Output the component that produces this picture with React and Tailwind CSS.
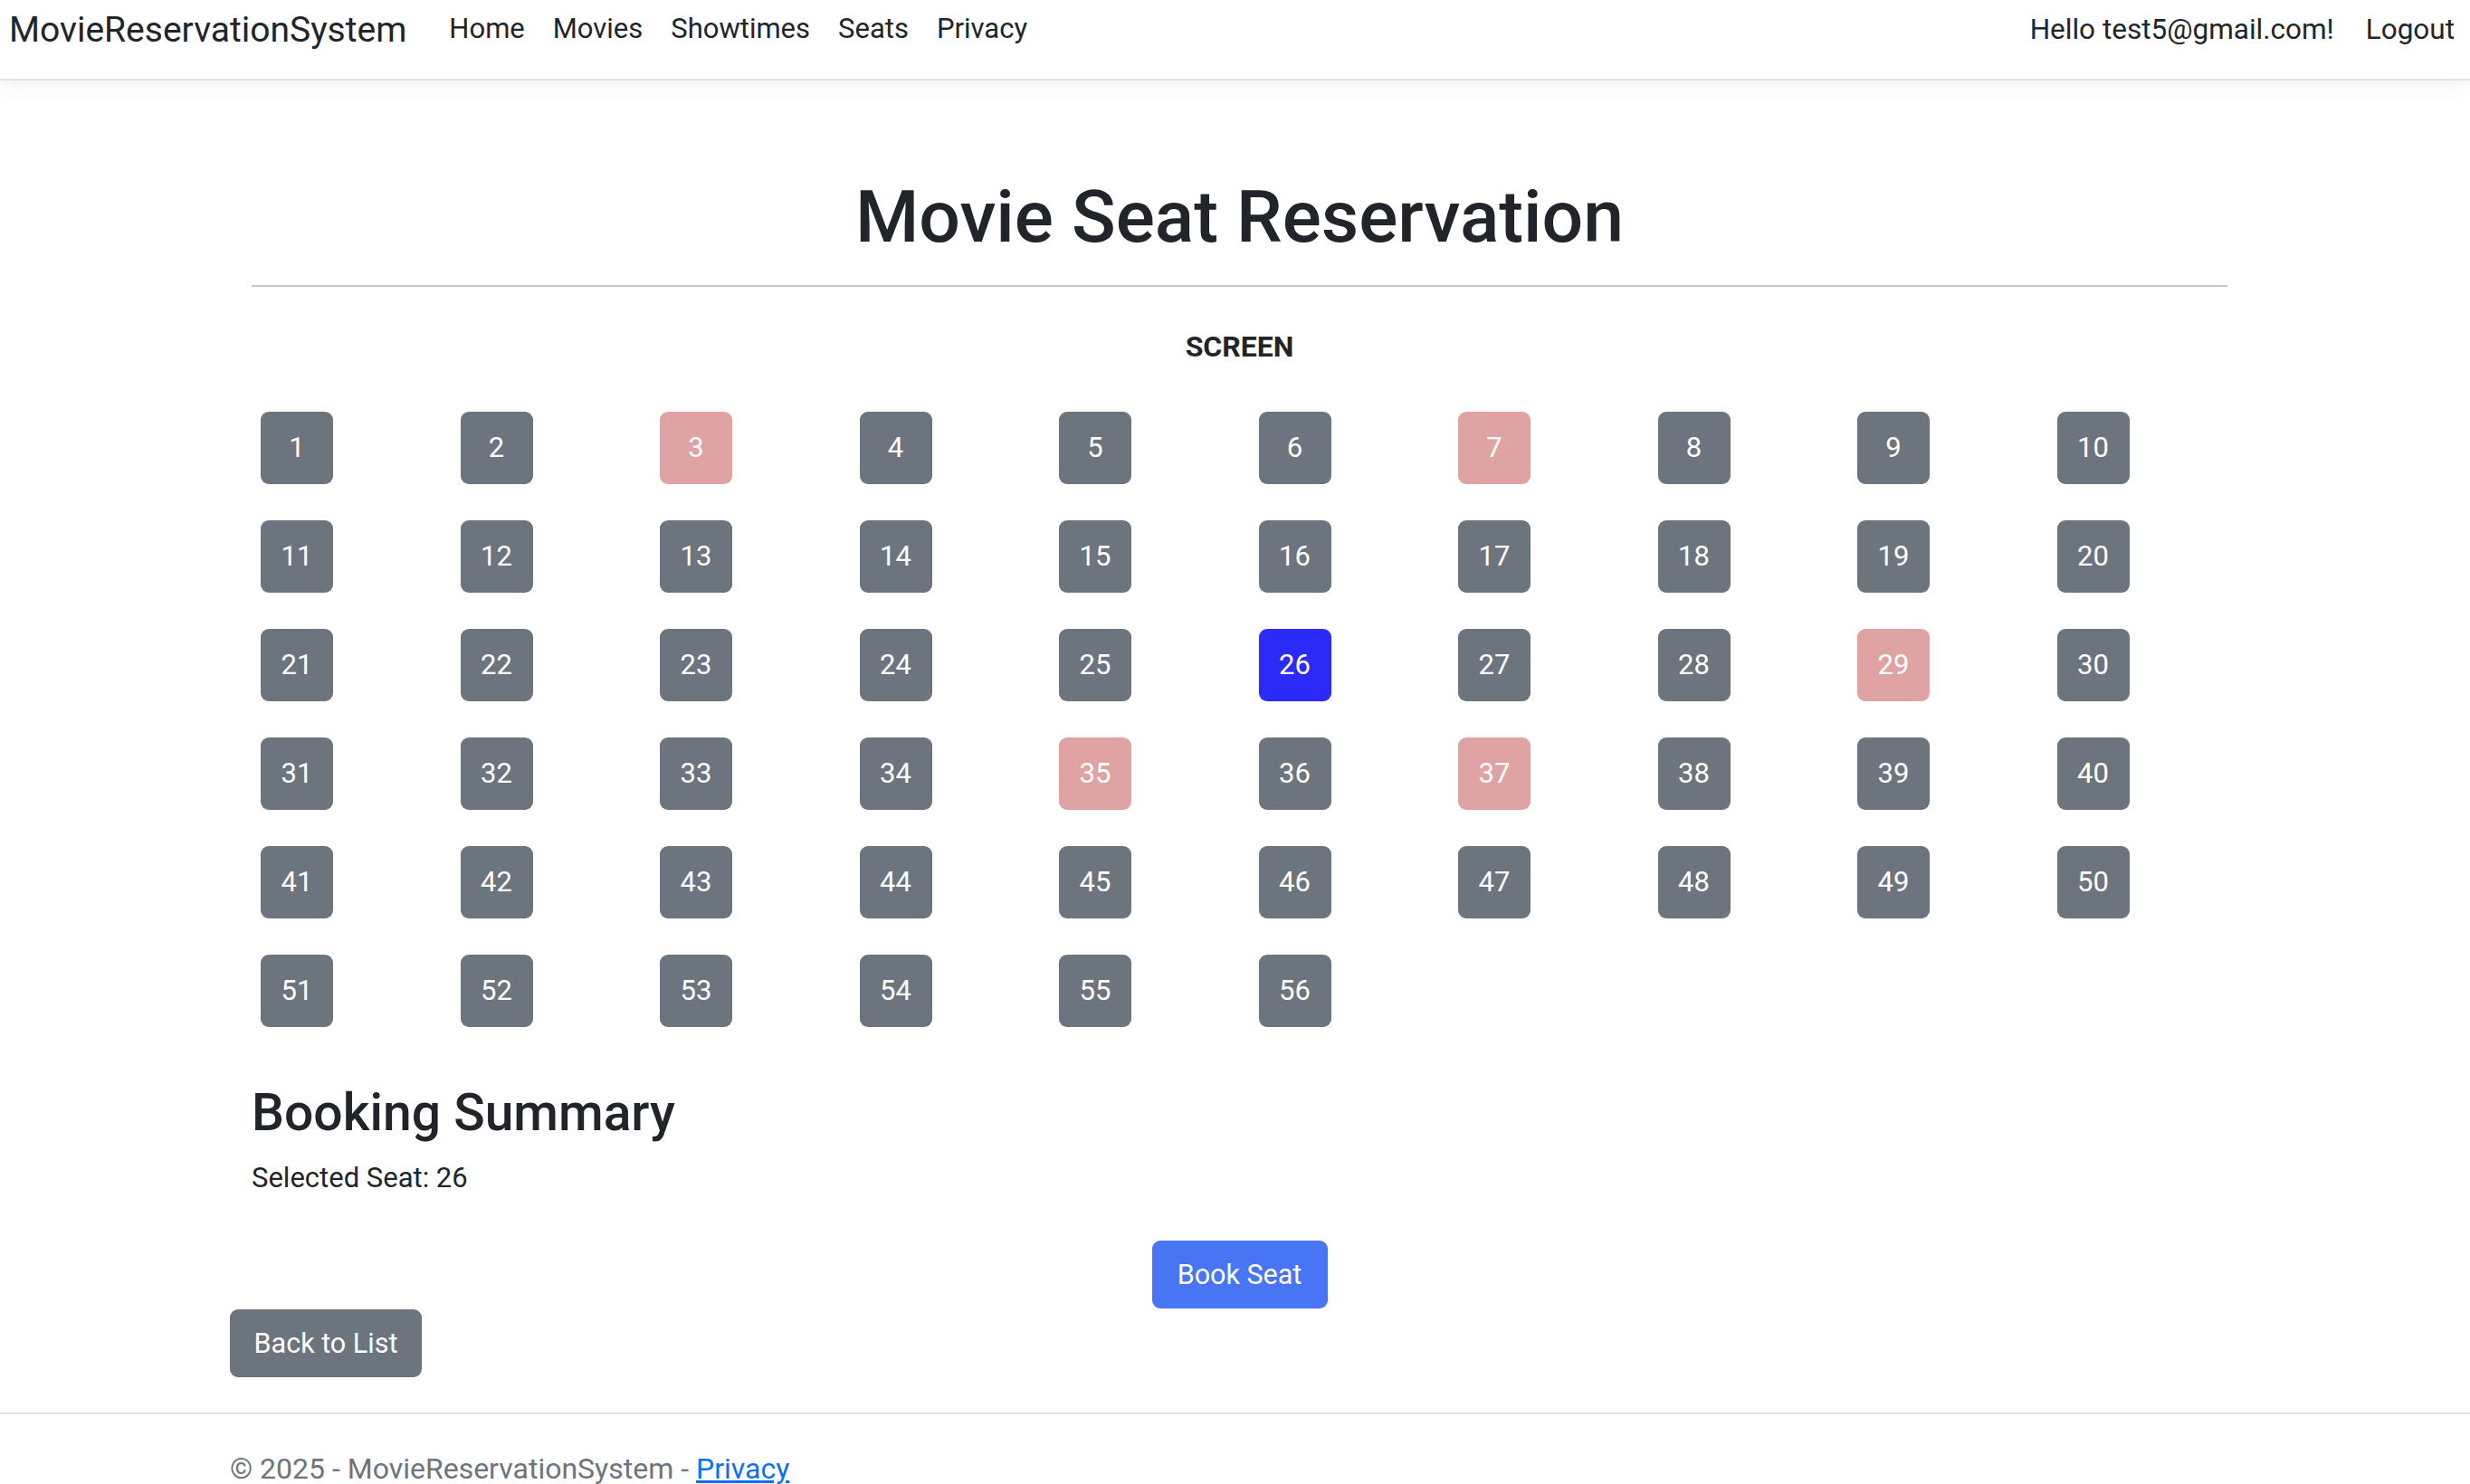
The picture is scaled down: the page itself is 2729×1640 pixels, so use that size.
import React, { useState } from 'react';

const reserved = [3, 7, 29, 35, 37];

const Seat = ({ n, selected, onPick }) => {
  const taken = reserved.includes(n);
  let color = 'bg-[#6c757d]';
  if (taken) color = 'bg-[#dfa3a3]';
  if (selected) color = 'bg-[#2c2af8]';
  return (
    <button
      onClick={() => !taken && onPick(n)}
      className={`${color} w-[80px] h-[80px] rounded-[9px] text-white text-[31px] leading-none flex items-center justify-center`}
    >
      {n}
    </button>
  );
};

export default function App() {
  const [seat, setSeat] = useState(26);
  const seats = Array.from({ length: 56 }, (_, i) => i + 1);

  return (
    <div className="h-[1640px] bg-white text-[#212529] font-['Segoe_UI',Roboto,'Liberation_Sans',sans-serif] overflow-hidden">
      {/* navbar */}
      <nav className="h-[89px] border-b-2 border-[#dee2e6] shadow-[0_8px_22px_rgba(0,0,0,0.05)] flex items-start pl-[10px] pr-[17px]">
        <a className="text-[39px] leading-[1.5] pt-[4px] mr-[47px]">MovieReservationSystem</a>
        <ul className="flex gap-[31px] text-[31px] leading-[1.5] pt-[9px]">
          <li>Home</li>
          <li>Movies</li>
          <li>Showtimes</li>
          <li>Seats</li>
          <li>Privacy</li>
        </ul>
        <div className="ml-auto flex gap-[35px] text-[31.5px] leading-[1.5] pt-[9px]">
          <span>Hello test5@gmail.com!</span>
          <span>Logout</span>
        </div>
      </nav>

      <main className="pl-[254px]">
        <div className="ml-[24px] w-[2183px]">
          <h1 className="mt-[103px] text-center text-[80.5px] font-medium leading-[1.2]">Movie Seat Reservation</h1>
          <hr className="mt-[26px] border-t-2 border-[#c6c6c6]" />
          <div className="mt-[42px] text-center text-[32px] font-bold leading-[1.5]">SCREEN</div>

          <div className="mt-[48px] ml-[10px] grid grid-cols-[repeat(10,80px)] gap-x-[140.5px] gap-y-[40px]">
            {seats.map(n => (
              <Seat key={n} n={n} selected={n === seat} onPick={setSeat} />
            ))}
          </div>

          <h2 className="mt-[61px] text-[57px] font-medium leading-[1.2]">Booking Summary</h2>
          <p className="mt-[15px] text-[31px] leading-[1.5]">Selected Seat: {seat}</p>

          <div className="mt-[46px] flex justify-center">
            <button className="w-[194px] h-[75px] rounded-[9px] bg-[#4875f4] text-white text-[30.5px]">Book Seat</button>
          </div>
        </div>

        <button className="mt-[1px] w-[212px] h-[75px] rounded-[9px] bg-[#6c757d] text-white text-[30.5px]">Back to List</button>
      </main>

      <footer className="mt-[39px] border-t-2 border-[#dee2e6] pl-[254px] pt-[36px] text-[32px] leading-[1.5] text-[#6c757d]">
        © 2025 - MovieReservationSystem - <a className="text-[#0d6efd] underline">Privacy</a>
      </footer>
    </div>
  );
}
